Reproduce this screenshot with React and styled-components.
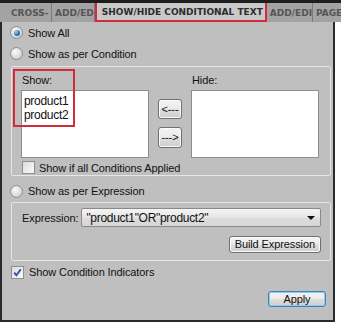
import React from 'react';
import styled, { createGlobalStyle, css } from 'styled-components';

const GlobalStyle = createGlobalStyle`
  html, body {
    margin: 0;
    padding: 0;
    background: #ffffff;
  }
  body {
    font-family: "Liberation Sans", Arial, sans-serif;
    font-size: 11px;
    letter-spacing: -0.1px;
    color: #111;
  }
`;

const Frame = styled.div`
  width: 341px;
  height: 325px;
  display: flex;
  flex-direction: column;
`;

// Tab strip
const TabBar = styled.div`
  display: flex;
  height: 19px;
  border-top: 3px solid #1e1e1e;
  background: #a3a3a3;
  overflow: hidden;
`;

const Tab = styled.div`
  flex: 0 0 ${ ({ width }) => width }px;
  box-sizing: border-box;
  height: 19px;
  padding-left: ${ ({ pad }) => pad }px;
  display: flex;
  align-items: center;
  white-space: nowrap;
  font-family: "DejaVu Sans", Verdana, sans-serif;
  font-weight: bold;
  font-size: 9px;
  letter-spacing: 0;
  color: #555;
  border-right: 1px solid #7a7a7a;
  ${ ({ active }) => active && css`
    background: #c9c9c9;
    color: #2c2c2c;
    border: 2px solid #d42a3a;
    margin-top: -2px;
    height: 21px;
  ` }
`;

const Body = styled.div`
  width: 335px;
  height: 300px;
  box-sizing: border-box;
  background: #bfbfbf;
  border: 2px solid #2a2a2a;
  border-top: none;
  padding: 0 6px 0 7px;
  display: flex;
  flex-direction: column;
`;

const OptionRow = styled.label`
  box-sizing: border-box;
  display: flex;
  align-items: center;
  gap: 5px;
  height: ${ ({ h }) => h || 21 }px;
  padding-top: ${ ({ pt }) => pt || 0 }px;
  padding-left: ${ ({ indent }) => indent || 1 }px;
  white-space: nowrap;
`;

const Radio = styled.span`
  width: 11px;
  height: 11px;
  border-radius: 50%;
  border: 1px solid #8b8d8f;
  background: radial-gradient(circle at 40% 35%, #fbfbfb, #d4d4d4 70%);
  display: flex;
  align-items: center;
  justify-content: center;
  &::after {
    content: '';
    display: ${ ({ checked }) => (checked ? 'block' : 'none') };
    width: 6px;
    height: 6px;
    border-radius: 50%;
    background: radial-gradient(circle at 35% 30%, #9fd2f3, #2b6ea3 60%, #1c4a74);
  }
`;

const Box = styled.span`
  width: 11px;
  height: 11px;
  border: 1px solid #8e8f8f;
  background: linear-gradient(135deg, #dcdcdc, #fafafa);
  display: flex;
  align-items: center;
  justify-content: center;
`;

const Group = styled.div`
  position: relative;
  box-sizing: border-box;
  width: 320px;
  height: ${ ({ h }) => h }px;
  margin-left: 2px;
  margin-top: ${ ({ mt }) => mt || 0 }px;
  border: 1px solid #e6e6e6;
  border-radius: 2px;
  padding: ${ ({ pad }) => pad };
`;

const ListGrid = styled.div`
  display: grid;
  grid-template-columns: 128px 24px 128px;
  column-gap: 9px;
  grid-template-rows: 17px 68px;
`;

const FieldLabel = styled.div`
  align-self: start;
  line-height: 14px;
  padding-left: 1px;
`;

const ListBox = styled.div`
  box-sizing: border-box;
  background: #fff;
  border: 1px solid #8c8c8c;
  padding: 3px 2px;
  line-height: 14px;
  font-size: 12px;
  letter-spacing: -0.3px;
`;

const ArrowCol = styled.div`
  display: flex;
  flex-direction: column;
  gap: 8px;
  padding-top: 9px;
`;

const Btn = styled.button`
  box-sizing: border-box;
  height: ${ ({ h }) => h || 20 }px;
  width: ${ ({ w }) => (w ? `${ w }px` : 'auto') };
  padding: 0 ${ ({ px }) => (px === undefined ? 4 : px) }px;
  white-space: nowrap;
  font-family: "Liberation Sans", Arial, sans-serif;
  font-size: 11px;
  letter-spacing: -0.1px;
  color: #111;
  border: 1px solid ${ ({ primary }) => (primary ? '#3b82b6' : '#707070') };
  border-radius: 3px;
  background: linear-gradient(#f3f3f3 0%, #ebebeb 48%, #dddddd 52%, #cfcfcf 100%);
  box-shadow: inset 0 0 0 1px ${ ({ primary }) => (primary ? '#8fcdf0' : '#fbfbfb') };
  line-height: 1;
`;

const CheckRow = styled.label`
  display: flex;
  align-items: center;
  gap: 4px;
  height: 17px;
  margin-top: 1px;
  padding-left: 1px;
  white-space: nowrap;
`;

const ExprRow = styled.div`
  display: flex;
  align-items: center;
  gap: 3px;
  height: 19px;
`;

const Combo = styled.div`
  box-sizing: border-box;
  width: 242px;
  height: 19px;
  border: 1px solid #8a8a8a;
  border-radius: 2px;
  background: linear-gradient(#f4f4f4, #e6e6e6 50%, #dcdcdc 51%, #d6d6d6);
  display: flex;
  align-items: center;
  justify-content: space-between;
  padding: 0 5px 0 4px;
  font-size: 12px;
  letter-spacing: -0.3px;
`;

const Caret = styled.span`
  width: 0;
  height: 0;
  border-left: 4px solid transparent;
  border-right: 4px solid transparent;
  border-top: 4px solid #111;
`;

const RightAlign = styled.div`
  display: flex;
  justify-content: flex-end;
  margin-top: ${ ({ mt }) => mt }px;
  padding-right: ${ ({ pr }) => pr || 0 }px;
`;

const Annotation = styled.div`
  position: absolute;
  left: 1px;
  top: 2px;
  width: 62px;
  height: 58px;
  box-sizing: border-box;
  border: 2px solid #d42a3a;
  pointer-events: none;
`;

const Check = () => (
  <svg width="9" height="9" viewBox="0 0 9 9">
    <path d="M1.2 4.6 L3.4 7.2 L7.8 1.2" fill="none" stroke="#2a4f9c" strokeWidth="1.8" />
  </svg>
);

const tabs = [
  { label: 'CROSS-', width: 52, pad: 11 },
  { label: 'ADD/ED', width: 42, pad: 3 },
  { label: 'SHOW/HIDE CONDITIONAL TEXT', width: 172, pad: 5, active: true },
  { label: 'ADD/EDI', width: 43, pad: 3 },
  { label: 'PAGE', width: 40, pad: 3 }
];

const App = () => (
  <Frame>
    <GlobalStyle />
    <TabBar>
      { tabs.map((t, i) => (
        <Tab key={ i } width={ t.width } pad={ t.pad } active={ t.active }>{ t.label }</Tab>
      )) }
    </TabBar>
    <Body>
      <OptionRow><Radio checked />Show All</OptionRow>
      <OptionRow><Radio />Show as per Condition</OptionRow>
      <Group h={ 110 } mt={ 2 } pad="6px 0 0 9px">
        <Annotation />
        <ListGrid>
          <FieldLabel>Show:</FieldLabel>
          <span />
          <FieldLabel>Hide:</FieldLabel>
          <ListBox>
            <div>product1</div>
            <div>product2</div>
          </ListBox>
          <ArrowCol>
            <Btn w={ 24 } h={ 20 } px={ 0 }>&lt;---</Btn>
            <Btn w={ 24 } h={ 21 } px={ 0 }>---&gt;</Btn>
          </ArrowCol>
          <ListBox />
        </ListGrid>
        <CheckRow><Box />Show if all Conditions Applied</CheckRow>
      </Group>
      <OptionRow h={ 26 } pt={ 4 }><Radio />Show as per Expression</OptionRow>
      <Group h={ 59 } pad="5px 9px 0 10px">
        <ExprRow>
          <span>Expression:</span>
          <Combo>
            <span>"product1"OR"product2"</span>
            <Caret />
          </Combo>
        </ExprRow>
        <RightAlign mt={ 9 }>
          <Btn h={ 17 } px={ 5 }>Build Expression</Btn>
        </RightAlign>
      </Group>
      <OptionRow h={ 22 } indent={ 2 }><Box><Check /></Box>Show Condition Indicators</OptionRow>
      <RightAlign mt={ 8 } pr={ 1 }>
        <Btn primary w={ 58 } h={ 16 }>Apply</Btn>
      </RightAlign>
    </Body>
  </Frame>
);

export default App;
